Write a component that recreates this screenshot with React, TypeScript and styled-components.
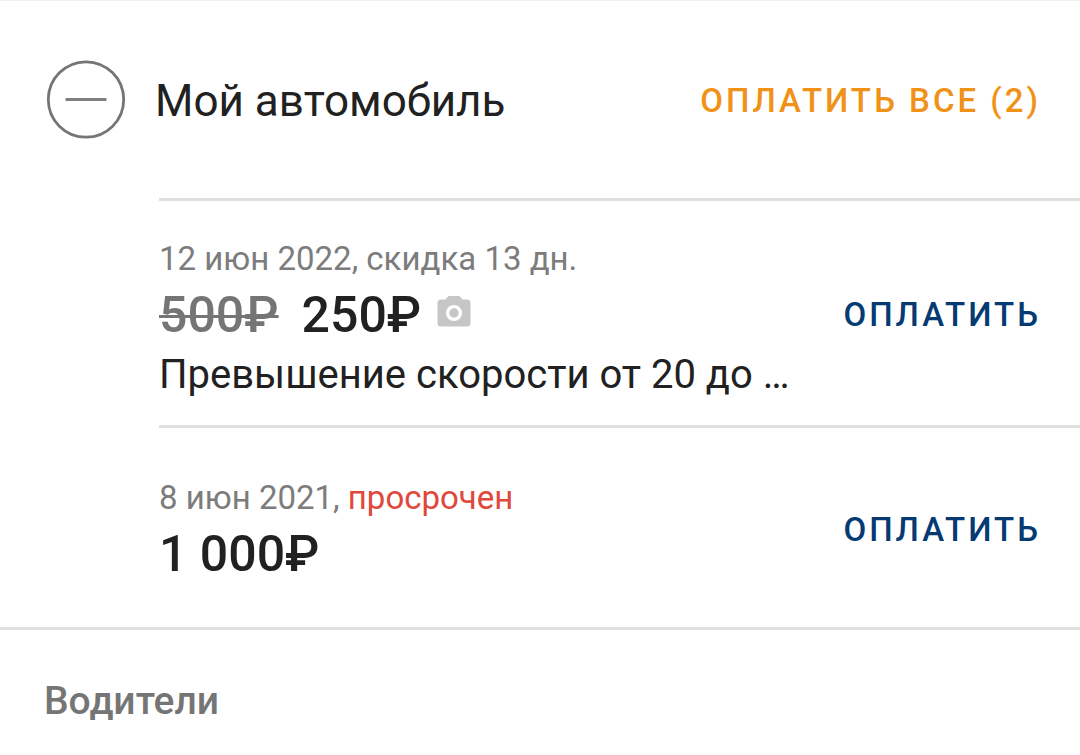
import React from "react";
import styled, { createGlobalStyle } from "styled-components";

const GlobalStyle = createGlobalStyle`
  * { box-sizing: border-box; }
  body { margin: 0; background: #fff; color: #212121; font-family: Roboto, "Noto Sans", sans-serif; }
  h2, p { margin: 0; font-weight: 400; }
`;

const Page = styled.main`
  border-top: 1px solid #f0f0f0;
`;

const Group = styled.section`
  border-bottom: 3px solid #e0e0e0;
`;

const GroupHeader = styled.header`
  display: flex;
  align-items: center;
  padding: 58px 39px 59px 46px;
`;

const Toggle = styled.button`
  display: flex;
  padding: 0;
  border: 0;
  background: none;
`;

const Title = styled.h2`
  flex: 1;
  padding-top: 4px;
  margin-left: 29px;
  font-size: 44px;
  line-height: 52px;
`;

const PayButton = styled.button<{ $accent?: boolean }>`
  flex: none;
  padding: 4px 0 0;
  border: 0;
  background: none;
  color: ${(p) => (p.$accent ? "#f19218" : "#053a73")};
  font-family: inherit;
  font-size: 33px;
  line-height: 40px;
  font-weight: 500;
  letter-spacing: 3px;
`;

const Fines = styled.ul`
  list-style: none;
  margin: 0 0 0 159px;
  padding: 0;
`;

const Fine = styled.li`
  display: flex;
  align-items: center;
  gap: 40px;
  min-height: 202px;
  padding: 26px 39px 26px 0;
  border-top: 3px solid #e0e0e0;
`;

const Details = styled.div`
  flex: 1;
  min-width: 0;
  padding-top: 12px;
`;

const Meta = styled.p`
  color: #7c7c7c;
  font-size: 33px;
  line-height: 40px;
`;

const Overdue = styled.span`
  color: #e0483c;
`;

const Amounts = styled.p`
  display: flex;
  align-items: center;
  font-size: 50px;
  line-height: 72px;
  font-weight: 500;
`;

const OldPrice = styled.s`
  margin-right: 23px;
  color: #757575;
  text-decoration-thickness: 3px;
`;

const CameraIcon = styled.svg`
  margin: 0 0 8px 16px;
`;

const Description = styled.p`
  font-size: 40px;
  line-height: 48px;
`;

const SectionTitle = styled.h2`
  padding: 47px 44px;
  color: #757575;
  font-size: 39px;
  line-height: 48px;
  font-weight: 500;
`;

const Camera = () => (
  <CameraIcon width="34" height="31" viewBox="0 0 34 31" role="img" aria-label="Камера">
    <path
      fill="#c6c6c6"
      d="M12.500 0q-1 0-1.700.7L8.500 3.500H4A3.500 3.500 0 0 0 .5 7v20A3.500 3.500 0 0 0 4 30.500h26a3.500 3.500 0 0 0 3.500-3.500V7A3.500 3.500 0 0 0 30 3.500h-4.500L23.200.7Q22.500 0 21.500 0z"
    />
    <circle cx="17" cy="17" r="6.400" fill="none" stroke="#fff" strokeWidth="3.300" />
  </CameraIcon>
);

export default function App() {
  return (
    <>
      <GlobalStyle />
      <Page>
        <Group>
          <GroupHeader>
            <Toggle type="button" aria-label="Свернуть">
              <svg width="80" height="80" viewBox="0 0 80 80" fill="none" strokeWidth="2.800">
                <circle cx="40" cy="40.500" r="37.700" stroke="#757575" />
                <path d="M19.500 40.500h41" stroke="#808080" />
              </svg>
            </Toggle>
            <Title>Мой автомобиль</Title>
            <PayButton type="button" $accent>ОПЛАТИТЬ ВСЕ (2)</PayButton>
          </GroupHeader>
          <Fines>
            <Fine>
              <Details>
                <Meta>12 июн 2022, скидка 13 дн.</Meta>
                <Amounts>
                  <OldPrice>500₽</OldPrice>
                  <span>250₽</span>
                  <Camera />
                </Amounts>
                <Description>Превышение скорости от 20 до …</Description>
              </Details>
              <PayButton type="button">ОПЛАТИТЬ</PayButton>
            </Fine>
            <Fine>
              <Details>
                <Meta>8 июн 2021, <Overdue>просрочен</Overdue></Meta>
                <Amounts>1 000₽</Amounts>
              </Details>
              <PayButton type="button">ОПЛАТИТЬ</PayButton>
            </Fine>
          </Fines>
        </Group>
        <SectionTitle>Водители</SectionTitle>
      </Page>
    </>
  );
}
